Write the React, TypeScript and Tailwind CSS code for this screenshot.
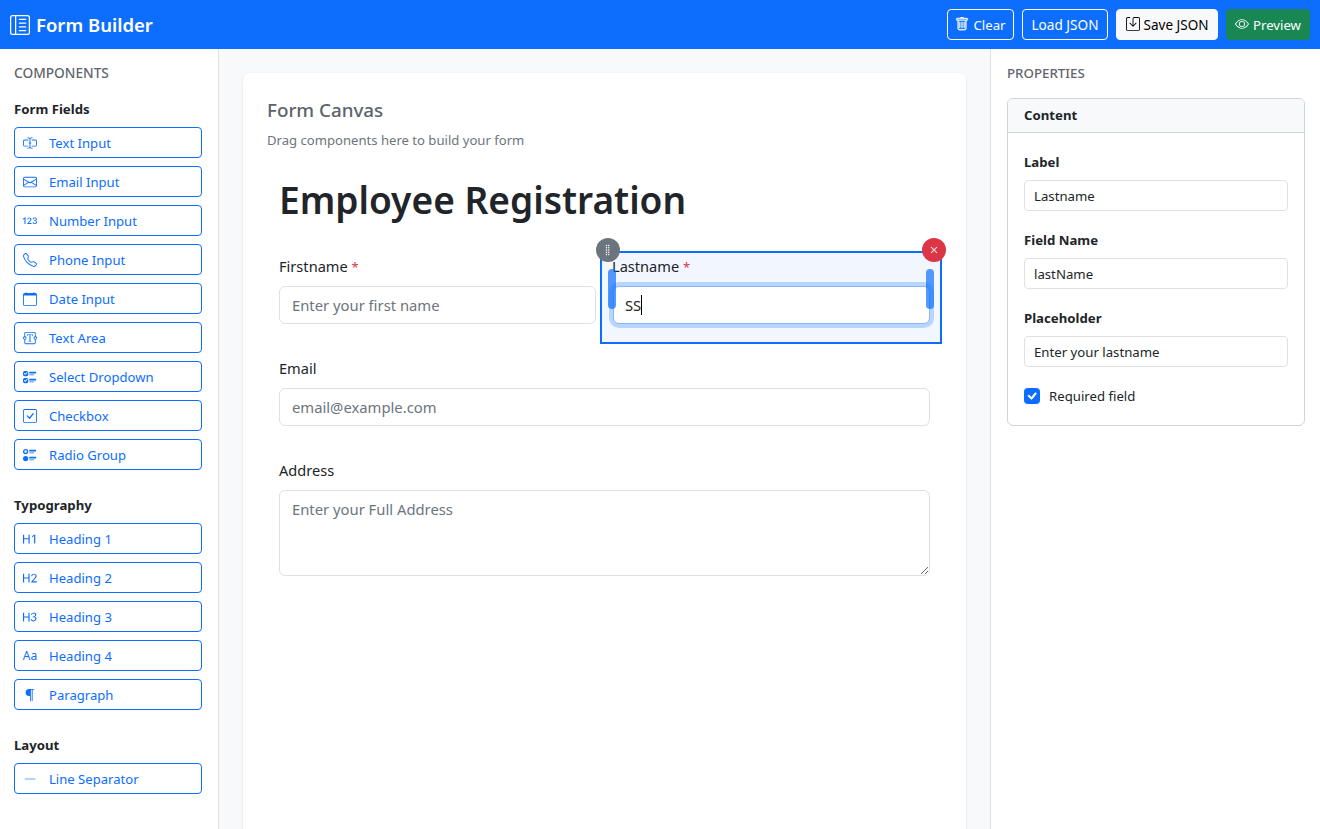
import React from "react";
import {
  BsLayoutTextSidebarReverse, BsTrash, BsSave, BsEye, BsInputCursorText, BsEnvelope, Bs123, BsTelephone,
  BsCalendar, BsTextareaT, BsUiChecks, BsCheckSquare, BsUiRadios, BsTypeH1, BsTypeH2, BsTypeH3,
  BsParagraph, BsDashLg, BsGripVertical, BsXLg, BsCheck,
} from "react-icons/bs";

type Item = { label: string; icon: React.ReactNode };

const fields: Item[] = [
  { label: "Text Input", icon: <BsInputCursorText size={14} /> },
  { label: "Email Input", icon: <BsEnvelope size={14} /> },
  { label: "Number Input", icon: <Bs123 size={14} /> },
  { label: "Phone Input", icon: <BsTelephone size={14} /> },
  { label: "Date Input", icon: <BsCalendar size={14} /> },
  { label: "Text Area", icon: <BsTextareaT size={14} /> },
  { label: "Select Dropdown", icon: <BsUiChecks size={14} /> },
  { label: "Checkbox", icon: <BsCheckSquare size={14} /> },
  { label: "Radio Group", icon: <BsUiRadios size={14} /> },
];
const typo: Item[] = [
  { label: "Heading 1", icon: <BsTypeH1 size={14} /> },
  { label: "Heading 2", icon: <BsTypeH2 size={14} /> },
  { label: "Heading 3", icon: <BsTypeH3 size={14} /> },
  { label: "Heading 4", icon: <span className="text-[12px] leading-none">Aa</span> },
  { label: "Paragraph", icon: <BsParagraph size={14} /> },
];
const layout: Item[] = [{ label: "Line Separator", icon: <BsDashLg size={14} strokeWidth={0.6} className="opacity-40" /> }];

function Group({ title, items, className }: { title: string; items: Item[]; className: string }) {
  return (
    <div className={className}>
      <div className="mb-[7px] h-[21px] text-[13.2px] leading-[21px] font-bold text-[#212529]">{title}</div>
      <div className="flex flex-col gap-2">
        {items.map((it) => (
          <button
            key={it.label}
            className="flex h-[31px] w-[188px] items-center rounded border border-[#0d6efd] bg-white pl-[7px] text-[13.1px] text-[#0d6efd]"
          >
            <span className="flex w-4 justify-center">{it.icon}</span>
            <span className="ml-[11px] pt-[2px]">{it.label}</span>
          </button>
        ))}
      </div>
    </div>
  );
}

function PropInput({ label, value }: { label: string; value: string }) {
  return (
    <div className="mb-[18px]">
      <div className="mb-2 h-[21px] pt-px text-[13.2px] leading-[21px] font-bold text-[#212529]">{label}</div>
      <input
        readOnly
        value={value}
        className="block h-[31px] w-[264px] rounded border border-[#dee2e6] bg-white px-[9px] text-[13.2px] text-[#212529] outline-none"
      />
    </div>
  );
}

export default function App() {
  return (
    <div className="flex h-screen flex-col overflow-hidden bg-white font-['Noto_Sans',sans-serif] text-[#212529]">
      <header className="flex h-[49px] shrink-0 items-center bg-[#0d6efd] pl-[10px] pr-[10px] text-white">
        <BsLayoutTextSidebarReverse size={20} />
        <span className="ml-[6px] text-[18.5px] font-semibold">Form Builder</span>
        <div className="ml-auto flex gap-2 text-[13.2px]">
          <button className="flex h-[31px] w-[67px] items-center justify-center gap-1 rounded border border-white">
            <BsTrash size={14} strokeWidth={0.4} className="-mt-[2px]" />
            <span className="pt-[2px]">Clear</span>
          </button>
          <button className="flex h-[31px] w-[86px] items-center justify-center rounded border border-white">
            <span className="pt-[2px] text-[13.6px]">Load JSON</span>
          </button>
          <button className="flex h-[31px] w-[102px] items-center justify-center gap-1 rounded border border-[#f8f9fa] bg-[#f8f9fa] text-black">
            <BsSave size={14} className="-mt-[1px]" />
            <span className="pt-[2px] text-[13.5px]">Save JSON</span>
          </button>
          <button className="flex h-[31px] w-[84px] items-center justify-center gap-1 rounded bg-[#198754]">
            <BsEye size={14} className="-mt-[2px]" />
            <span className="pt-[2px]">Preview</span>
          </button>
        </div>
      </header>

      <div className="flex min-h-0 flex-1">
        <aside className="w-[219px] shrink-0 border-r border-[#dee2e6] bg-white pl-[14px] pt-[13px]">
          <div className="mb-[16px] h-[21px] text-[13.7px] leading-[21px] font-medium text-[#5f666d]">COMPONENTS</div>
          <Group title="Form Fields" items={fields} className="" />
          <Group title="Typography" items={typo} className="mt-[25px]" />
          <Group title="Layout" items={layout} className="mt-[25px]" />
        </aside>

        <main className="min-w-0 flex-1 overflow-hidden bg-[#f8f9fa] px-6 pt-6">
          <div className="h-[800px] w-[723px] rounded-md bg-white p-6 shadow-sm">
            <div className="mt-px h-6 text-[18.8px] leading-6 font-medium text-[#5c636a]">Form Canvas</div>
            <div className="mt-2 h-[21px] text-[13.1px] leading-[21px] text-[#6c757d]">Drag components here to build your form</div>

            <div className="px-3 pt-[25px]">
              <h1 className="h-[48px] text-[37.1px] leading-[48px] font-semibold text-[#212529]">Employee Registration</h1>
            </div>

            <div className="mt-[18px] flex items-start">
              <div className="w-[329px] pl-3 pt-3">
                <div className="h-6 text-[14.6px] leading-6">
                  Firstname <span className="text-[13px] text-[#dc3545]">*</span>
                </div>
                <input
                  readOnly
                  placeholder="Enter your first name"
                  className="mt-2 block h-[38px] w-[317px] rounded-md border border-[#dee2e6] bg-white px-3 text-[14.8px] outline-none placeholder:text-[#6c757d]"
                />
              </div>
              <div className="relative ml-1 mt-[9px] h-[93px] w-[342px] border-2 border-[#0d6efd] bg-[#f2f7ff] px-[11px] pt-[1px]">
                <div className="-ml-px h-6 text-[14.6px] leading-6">
                  Lastname <span className="text-[13px] text-[#dc3545]">*</span>
                </div>
                <div className="mt-2 flex h-[38px] w-[317px] items-center rounded-md border border-[#86b7fe] bg-white pl-[11px] pr-3 text-[14.8px] shadow-[0_0_0_4px_rgba(13,110,253,0.25)]">
                  SS<span className="h-[20px] w-px bg-black" />
                </div>
                <span className="absolute -left-[6px] -top-[15px] flex h-6 w-6 items-center justify-center rounded-full bg-[#6c757d] text-white">
                  <BsGripVertical size={12} />
                </span>
                <span className="absolute -right-[6px] -top-[15px] flex h-6 w-6 items-center justify-center rounded-full bg-[#dc3545] text-white">
                  <BsXLg size={8} strokeWidth={1} />
                </span>
                <span className="absolute left-[6px] top-[16px] h-10 w-2 rounded bg-[#0d6efd]/70" />
                <span className="absolute right-[6px] top-[16px] h-10 w-2 rounded bg-[#0d6efd]/70" />
              </div>
            </div>

            <div className="px-3 pt-[12px]">
              <div className="h-6 text-[14.6px] leading-6">Email</div>
              <input
                readOnly
                placeholder="email@example.com"
                className="mt-2 block h-[38px] w-[651px] rounded-md border border-[#dee2e6] bg-white px-3 text-[14.8px] outline-none placeholder:text-[#6c757d]"
              />
            </div>

            <div className="px-3 pt-[32px]">
              <div className="h-6 text-[14.6px] leading-6">Address</div>
              <textarea
                readOnly
                placeholder="Enter your Full Address"
                className="mt-2 block h-[86px] w-[651px] rounded-md border border-[#dee2e6] bg-white px-3 py-[7px] text-[14.8px] outline-none placeholder:text-[#6c757d]"
              />
            </div>
          </div>
        </main>

        <aside className="w-[330px] shrink-0 border-l border-[#dee2e6] bg-white pl-4 pt-[14px]">
          <div className="mb-[14px] h-[21px] text-[13.3px] leading-[21px] font-medium text-[#5f666d]">PROPERTIES</div>
          <div className="h-[328px] w-[298px] overflow-hidden rounded-md border border-[#ced4da]">
            <div className="flex h-[34px] items-center border-b border-[#ced4da] bg-[#f8f9fa] px-4 text-[13.2px] font-bold">Content</div>
            <div className="px-4 pt-[18px]">
              <PropInput label="Label" value="Lastname" />
              <PropInput label="Field Name" value="lastName" />
              <PropInput label="Placeholder" value="Enter your lastname" />
              <div className="mt-[21px] flex h-4 items-center gap-[9px] text-[13.2px]">
                <span className="flex h-4 w-4 items-center justify-center rounded bg-[#0d6efd] text-white">
                  <BsCheck size={16} strokeWidth={0.8} />
                </span>
                <span className="pt-px">Required field</span>
              </div>
            </div>
          </div>
        </aside>
      </div>
    </div>
  );
}
